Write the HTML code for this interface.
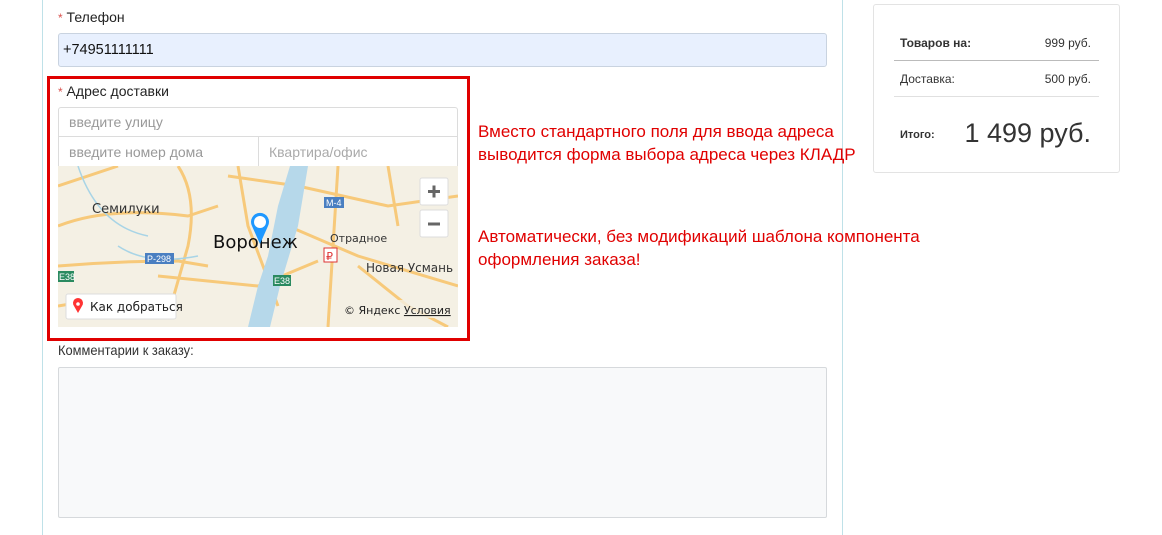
<!DOCTYPE html>
<html><head><meta charset="utf-8"><style>
*{box-sizing:border-box;margin:0;padding:0}
body{width:1162px;height:535px;background:#fff;font-family:"Liberation Sans",sans-serif;position:relative;overflow:hidden;color:#222}
.abs{position:absolute}
.vl{position:absolute;top:0;width:1px;height:535px;background:#bfe1e8}
.lbl{font-size:14px;color:#222}
.lbl b{color:#d9534f;font-weight:normal;font-size:12px}
.inp{position:absolute;border:1px solid #dcdcdc;font-size:14px;color:#999;padding-left:10px;display:flex;align-items:center;background:#fff}
.red{color:#e00000;font-size:17px;line-height:23px}
.card{position:absolute;left:873px;top:4px;width:247px;height:169px;border:1px solid #e3e3e3;border-radius:3px;font-size:12px;color:#333}
</style></head><body>
<div class="vl" style="left:42px"></div>
<div class="vl" style="left:842px"></div>

<div class="abs lbl" style="left:58px;top:9px"><b>*</b> Телефон</div>
<div class="abs" style="left:58px;top:33px;width:769px;height:34px;background:#e8f0fe;border:1px solid #c9d3e0;border-radius:3px;font-size:14.5px;padding:8px 4px;color:#111">+74951111111</div>

<div class="abs" style="left:47px;top:76px;width:423px;height:265px;border:3px solid #e00000"></div>
<div class="abs lbl" style="left:58px;top:83px"><b>*</b> Адрес доставки</div>
<div class="inp" style="left:58px;top:107px;width:400px;height:30px;border-radius:3px 3px 0 0">введите улицу</div>
<div class="inp" style="left:58px;top:136px;width:201px;height:31px">введите номер дома</div>
<div class="inp" style="left:258px;top:136px;width:200px;height:31px;color:#aaa">Квартира/офис</div>

<svg class="abs" style="left:58px;top:166px" width="400" height="161" viewBox="0 0 400 161">
<rect width="400" height="161" fill="#f4f0e4"/>
<path d="M0 20 L60 0 M0 60 Q50 40 130 50 L160 40 M120 0 Q140 30 130 80 L110 150 M170 10 L240 20 L330 40 L400 30 M100 110 L200 120 L260 95 M0 100 Q60 95 120 95 L150 100 M280 0 L270 161 M230 60 L300 90 L400 120 M180 0 L190 60 L220 140 M300 100 L350 140 L390 161 M330 0 L340 60 M0 140 L60 130" stroke="#f7c97a" stroke-width="3" fill="none"/>
<path d="M20 0 Q40 60 90 70 M60 80 Q90 100 140 90" stroke="#a8d4e6" stroke-width="1.5" fill="none"/>
<path d="M232 0 L220 40 L210 90 L200 120 L190 161 L212 161 L222 120 L240 60 L250 0 Z" fill="#b6d8ea"/>
<rect x="266" y="31" width="20" height="11" fill="#4a7fc1"/><text x="268" y="40" font-size="9" fill="#fff" font-family="Liberation Sans">M-4</text>
<rect x="87" y="87" width="29" height="11" fill="#4a7fc1"/><text x="89" y="96" font-size="9" fill="#fff" font-family="Liberation Sans">P-298</text>
<rect x="0" y="105" width="16" height="11" fill="#2a8a60"/><text x="1" y="114" font-size="9" fill="#fff" font-family="Liberation Sans">E38</text>
<rect x="215" y="109" width="18" height="11" fill="#2a8a60"/><text x="216" y="118" font-size="9" fill="#fff" font-family="Liberation Sans">E38</text>
<rect x="266" y="82" width="13" height="14" fill="#fff" stroke="#d33"/><text x="268" y="94" font-size="11" fill="#d33" font-family="DejaVu Sans">₽</text>
<text x="34" y="47" font-size="13" fill="#333" font-family="DejaVu Sans">Семилуки</text>
<text x="155" y="82" font-size="18" fill="#111" font-family="DejaVu Sans">Воронеж</text>
<text x="272" y="76" font-size="11" fill="#333" font-family="DejaVu Sans">Отрадное</text>
<text x="308" y="106" font-size="12" fill="#333" font-family="DejaVu Sans">Новая Усмань</text>
<path d="M202 78 L194 60 A9 9 0 1 1 210 60 Z" fill="#1e98ff"/><circle cx="202" cy="56" r="6" fill="#fff"/>
<rect x="362" y="12" width="28" height="27" rx="2" fill="#fff" stroke="#ddd"/><path d="M370 25.5h12M376 19.5v12" stroke="#666" stroke-width="3"/>
<rect x="362" y="44" width="28" height="27" rx="2" fill="#fff" stroke="#ddd"/><path d="M370 58h12" stroke="#666" stroke-width="3"/>
<rect x="8" y="128" width="110" height="25" rx="2" fill="#fff" stroke="#ddd"/>
<path d="M20 147 L16 140 A5 5 0 1 1 24 140 Z" fill="#f33"/><circle cx="20" cy="138" r="1.8" fill="#fff"/>
<text x="32" y="145" font-size="12" fill="#222" font-family="DejaVu Sans">Как добраться</text>
<rect x="284" y="134" width="112" height="18" fill="#f4f0e4" opacity=".8"/>
<text x="286" y="148" font-size="11" fill="#222" font-family="DejaVu Sans">© Яндекс <tspan text-decoration="underline">Условия</tspan></text>
</svg>

<div class="abs red" style="left:478px;top:120px">Вместо стандартного поля для ввода адреса<br>выводится форма выбора адреса через КЛАДР</div>
<div class="abs red" style="left:478px;top:225px">Автоматически, без модификаций шаблона компонента<br>оформления заказа!</div>

<div class="abs" style="left:58px;top:342px;font-size:14px;color:#333;transform:scaleX(.92);transform-origin:left">Комментарии к заказу:</div>
<div class="abs" style="left:58px;top:367px;width:769px;height:151px;background:#f8f9fa;border:1px solid #d6d9dc;border-radius:2px"></div>

<div class="card">
<div class="abs" style="left:26px;top:31px;font-weight:bold">Товаров на:</div>
<div class="abs" style="right:28px;top:31px">999 руб.</div>
<div class="abs" style="left:20px;top:55px;width:205px;height:1px;background:#bbb"></div>
<div class="abs" style="left:26px;top:67px">Доставка:</div>
<div class="abs" style="right:28px;top:67px">500 руб.</div>
<div class="abs" style="left:20px;top:91px;width:205px;height:1px;background:#e0e0e0"></div>
<div class="abs" style="left:26px;top:124px;font-weight:bold;font-size:11px">Итого:</div>
<div class="abs" style="right:28px;top:113px;font-size:27px;color:#333">1 499 руб.</div>
</div>
</body></html>
